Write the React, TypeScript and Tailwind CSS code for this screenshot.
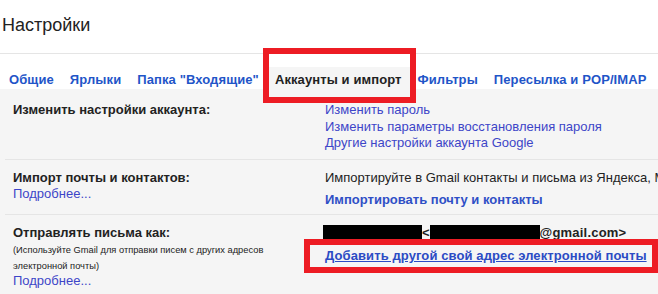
export default function App() {
  const tabs = [
    { label: "Общие", active: false },
    { label: "Ярлыки", active: false },
    { label: 'Папка "Входящие"', active: false },
    { label: "Аккаунты и импорт", active: true },
    { label: "Фильтры", active: false },
    { label: "Пересылка и POP/IMAP", active: false },
  ];
  return (
    <div className="relative w-[658px] h-[294px] overflow-hidden bg-white text-[13px] text-[#222] font-['Liberation_Sans',Arial,sans-serif] flex flex-col whitespace-nowrap">
      <div className="h-[54px] shrink-0 border-b border-[#e5e5e5] pl-[2px] pt-[14px]">
        <div className="text-[18px] leading-[22px] text-[#222]">Настройки</div>
      </div>
      <div className="h-[35px] shrink-0 pt-[13px] pl-[1px] flex items-start">
        {tabs.map((t) =>
          t.active ? (
            <div
              key={t.label}
              className="h-[22px] px-2 pt-[2.5px] leading-[20px] font-bold bg-[#f5f5f5] text-[#222] tracking-[0.1px]"
            >
              {t.label}
            </div>
          ) : (
            <div
              key={t.label}
              className="h-[22px] px-2 pt-[2.5px] leading-[20px] font-bold text-[#1f55c8] tracking-[0.1px]"
            >
              {t.label}
            </div>
          )
        )}
      </div>
      <div className="flex-1 bg-[#f5f5f5] pl-[5px] pt-[3px]">
        <div className="flex border-b border-[#e5e5e5] pl-[8px] pt-[10px] pb-[7px] leading-[16.5px]">
          <div className="w-[312px] shrink-0 font-bold">Изменить настройки аккаунта:</div>
          <div className="flex flex-col text-[#3d45c8]">
            <span>Изменить пароль</span>
            <span>Изменить параметры восстановления пароля</span>
            <span>Другие настройки аккаунта Google</span>
          </div>
        </div>
        <div className="flex border-b border-[#e5e5e5] pl-[8px] pt-[10px] pb-[5.5px] leading-[16.5px]">
          <div className="w-[312px] shrink-0 flex flex-col">
            <span className="font-bold">Импорт почты и контактов:</span>
            <span className="text-[#3d45c8]">Подробнее...</span>
          </div>
          <div className="flex flex-col">
            <span>
              Импортируйте в Gmail контакты и письма из Яндекса, Mail.ru, Hotmail, Yahoo! и других
              почтовых сервисов.
            </span>
            <span className="mt-[5.5px] font-bold text-[#2f4fc6]">Импортировать почту и контакты</span>
          </div>
        </div>
        <div className="flex pl-[8px] pt-[10px] leading-[16.5px]">
          <div className="w-[312px] shrink-0 flex flex-col">
            <span className="font-bold">Отправлять письма как:</span>
            <span className="mt-[1px] text-[9.3px] leading-[16px] text-[#222]">
              (Используйте Gmail для отправки писем с других адресов
              <br />
              электронной почты)
            </span>
            <span className="mt-[-1px] text-[#3d45c8]">Подробнее...</span>
          </div>
          <div className="flex flex-col">
            <div className="flex items-center h-[16.5px] font-bold">
              <span className="inline-block w-[99px] h-[14px] bg-black ml-[-2px] mt-[-2px]" />
              <span>&lt;</span>
              <span className="inline-block w-[110px] h-[14px] bg-black mt-[-2px]" />
              <span className="tracking-[0.2px]">@gmail.com&gt;</span>
            </div>
            <span className="mt-[7px] font-bold underline text-[#2b4bc4] tracking-[0.1px]">
              Добавить другой свой адрес электронной почты
            </span>
          </div>
        </div>
      </div>
      <div className="absolute left-[263px] top-[48px] w-[153px] h-[55px] border-[6px] border-[#ed1c24]" />
      <div className="absolute left-[304px] top-[239px] w-[354px] h-[34px] border-[6px] border-[#ed1c24]" />
    </div>
  );
}
